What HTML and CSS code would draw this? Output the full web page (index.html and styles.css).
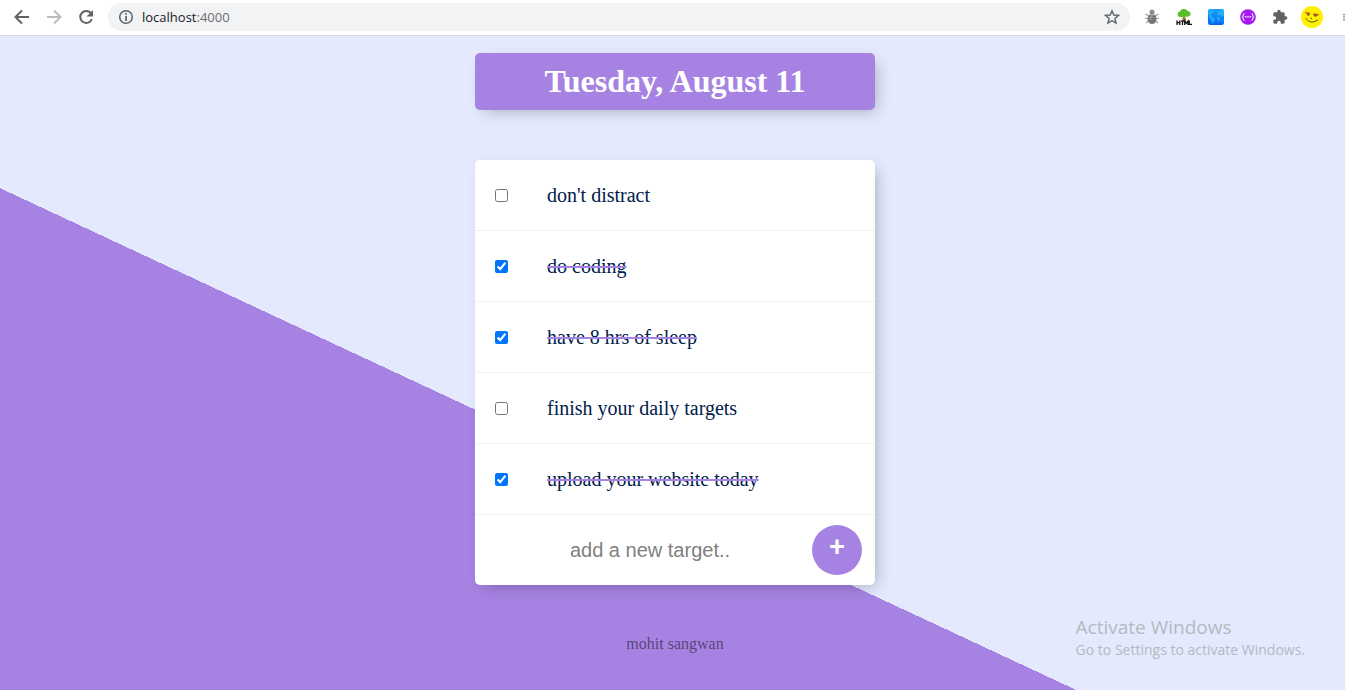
FILE: index.html
```html
<!DOCTYPE html>
<html lang="en">
<head>
<meta charset="utf-8">
<title>Daily targets</title>
<link rel="stylesheet" href="styles.css">
</head>
<body>
<header class="toolbar">
  <button class="tool" aria-label="Back"><svg width="16" height="16" viewBox="0 0 16 16" fill="none" stroke="#5f6368" stroke-width="2"><path d="M15 8H2M8 1.500 1.500 8 8 14.500"/></svg></button>
  <button class="tool" aria-label="Forward" disabled><svg width="16" height="16" viewBox="0 0 16 16" fill="none" stroke="#babcbe" stroke-width="2"><path d="M1 8h13M8 1.500 14.500 8 8 14.500"/></svg></button>
  <button class="tool" aria-label="Reload"><svg width="16" height="16" viewBox="0 0 16 16"><path d="M13.200 4.500A6 6 0 1 0 13.900 10" fill="none" stroke="#5f6368" stroke-width="2"/><path d="M15 1v6.500H8.500z" fill="#5f6368"/></svg></button>
  <div class="address">
    <svg width="16" height="16" viewBox="0 0 16 16"><circle cx="8" cy="8" r="6.300" fill="none" stroke="#5f6368" stroke-width="1.500"/><path d="M7.200 7h1.700v5H7.200zM7.200 4h1.700v1.700H7.200z" fill="#5f6368"/></svg>
    <span class="url">localhost<span class="port">:4000</span></span>
    <button class="tool" aria-label="Bookmark this page"><svg width="16" height="16" viewBox="0 0 16 16"><path d="M8 1.800 9.800 6l4.700.4-3.600 3.100 1.100 4.600L8 11.700l-4 2.400 1.100-4.600L1.500 6.400 6.200 6z" fill="none" stroke="#5f6368" stroke-width="1.400"/></svg></button>
  </div>
  <nav class="extensions" aria-label="Extensions">
    <button class="tool" aria-label="Bug reporter"><svg width="16" height="16" viewBox="0 0 16 16"><path d="M1.500 5 5 7M14.500 5 11 7M1 9.500h14M2 14l3.500-3M14 14l-3.500-3" stroke="#a0a0a0" stroke-width="1.200"/><circle cx="8" cy="3" r="2.500" fill="#8c8c8c"/><ellipse cx="8" cy="9.800" rx="4.500" ry="5.200" fill="#777"/><path d="M5 5.800h6" stroke="#ccc"/><ellipse cx="7" cy="9" rx="2" ry="2" fill="#909090"/></svg></button>
    <button class="tool" aria-label="HTML tree"><svg width="16" height="16" viewBox="0 0 16 16"><path d="M7 6h2.200l.8 6H6.200z" fill="#b0672c"/><path d="M4 2.500C5-.8 10.500-.8 11.500 2c3 0 4 3.500 2 5-1.500 1-3 .8-4 .3L8 10 7 7.500C5 8.800 2 8 1.700 5.800 1.500 3.700 2.500 2.600 4 2.500z" fill="#5dbc2c"/><path d="M1 11.500V16M1 13.700h2.800M3.800 11.500V16M4.800 12.200h3.400M6.500 12.200V16M8.700 16v-3.800l1.600 2 1.600-2V16M13.300 11.500v3.800H16" fill="none" stroke="#111" stroke-width="1.300"/></svg></button>
    <button class="tool" aria-label="World map"><svg width="16" height="16" viewBox="0 0 16 16"><defs><linearGradient id="sea" x2="0" y2="1"><stop stop-color="#19a0f6"/><stop offset="1" stop-color="#0768f0"/></linearGradient></defs><rect width="16" height="16" rx="2" fill="url(#sea)"/><path d="M0 3 3 1l3 .5L5 4 3 5.500 4 8l3 2-1 3-1.500 2L3 11 1 7zM9 2l2 .5L14 1l2 1v4l-2 2-1.500-2L11 7 9.500 5zM9 8l2.500 0L12 10l-1 3-1.500-2zM13 12l2-1v2z" fill="#26b5ff" fill-opacity=".75"/></svg></button>
    <button class="tool" aria-label="Code face"><svg width="16" height="16" viewBox="0 0 16 16"><circle cx="8" cy="8" r="7.800" fill="#a61ced"/><path d="M4.500 4.500c-2 0-.6 2.600-2 3.500 1.400.9 0 3.500 2 3.500M11.500 4.500c2 0 .6 2.600 2 3.500-1.400.9 0 3.500-2 3.500" fill="none" stroke="#f3dcff" stroke-width="1.100"/><path d="M5 7.700h1.500M7.300 7.700h1.400M9.500 7.700H11" stroke="#f3dcff" stroke-width="1.400"/></svg></button>
    <button class="tool" aria-label="Manage extensions"><svg width="16" height="16" viewBox="0 0 24 24"><path d="M20.500 11H19V7a2 2 0 0 0-2-2h-4V3.500a2.500 2.500 0 0 0-5 0V5H4a2 2 0 0 0-2 2v3.800h1.500a2.700 2.700 0 0 1 0 5.400H2V20a2 2 0 0 0 2 2h3.800v-1.500a2.700 2.700 0 0 1 5.400 0V22H17a2 2 0 0 0 2-2v-4h1.500a2.500 2.500 0 0 0 0-5z" fill="#5f6368"/></svg></button>
  </nav>
  <button class="tool" aria-label="Profile"><svg width="22" height="22" viewBox="0 0 22 22"><circle cx="11" cy="11" r="11" fill="#ffef00"/><path d="M4 6.500 9 7.500M12 8l6 .8" stroke="#f0603a" stroke-width="1.600"/><path d="M5.500 7.500h3.500q-.3 2.500-2 2.200-1.500-.3-1.500-2.200zM12.500 8.500h4q-.6 2.500-2.300 2.200-1.500-.3-1.700-2.200z" fill="#6b651c"/><path d="M4.500 12q4.500 7 12.500 2M10.300 11.500l-.3 1h1" fill="none" stroke="#5f5a00"/></svg></button>
  <button class="tool menu" aria-label="Menu"><svg width="4" height="16" viewBox="0 0 4 16" fill="#5f6368"><circle cx="2" cy="3" r="1.700"/><circle cx="2" cy="8" r="1.700"/><circle cx="2" cy="13" r="1.700"/></svg></button>
</header>
<main class="page">
  <h1 class="box heading">Tuesday, August 11</h1>
  <form class="box">
    <label class="item"><input class="check" type="checkbox"><span class="text">don't distract</span></label>
    <label class="item"><input class="check" type="checkbox" checked><span class="text">do coding</span></label>
    <label class="item"><input class="check" type="checkbox" checked><span class="text">have 8 hrs of sleep</span></label>
    <label class="item"><input class="check" type="checkbox"><span class="text">finish your daily targets</span></label>
    <label class="item"><input class="check" type="checkbox" checked><span class="text">upload your website today</span></label>
    <div class="new-item">
      <input class="entry" type="text" placeholder="add a new target.." aria-label="New target">
      <button class="add" type="button">+</button>
    </div>
  </form>
  <footer class="footer">mohit sangwan</footer>
  <aside class="notice">
    <p class="notice-title">Activate Windows</p>
    <p class="notice-text">Go to Settings to activate Windows.</p>
  </aside>
</main>
</body>
</html>
```
FILE: styles.css
```css
* {
  box-sizing: border-box;
}

body {
  margin: 0;
  min-height: 100vh;
  display: flex;
  flex-direction: column;
  overflow-x: hidden;
  font-family: "Liberation Serif", "Times New Roman", serif;
}

.toolbar {
  display: flex;
  align-items: center;
  height: 36px;
  padding: 0 0 2px 14px;
  gap: 16px;
  background: #fff;
  border-bottom: 1px solid #d7d9dd;
}

.tool {
  display: flex;
  flex: none;
  padding: 0;
  border: 0;
  background: none;
}

.address {
  flex: 1;
  display: flex;
  align-items: center;
  gap: 8px;
  height: 28px;
  margin: 0 -2px;
  padding: 0 10px;
  border-radius: 14px;
  background: #f1f3f4;
}

.url {
  flex: 1;
  font: 13px/20px "Open Sans", "Noto Sans", sans-serif;
  color: #202124;
}

.port {
  color: #6b6f73;
}

.extensions {
  display: flex;
  gap: 16px;
  margin-right: -3px;
}

.menu {
  width: 2px;
  margin-left: 4px;
}

.page {
  position: relative;
  flex: 1;
  padding: 17px 0 36px 5px;
  background: linear-gradient(25deg, #a683e3 calc(39% + 2px), #e4e9fd calc(39% + 2px));
}

.box {
  width: 400px;
  max-width: 100%;
  margin: 0 auto 50px;
  border-radius: 5px;
  background: #fff;
  box-shadow: 5px 5px 15px -5px rgba(0, 0, 0, 0.3);
}

.heading {
  padding: 10px;
  background: #a683e3;
  color: #fff;
  font-size: 32px;
  line-height: 37px;
  text-align: center;
}

.item {
  display: flex;
  align-items: center;
  height: 71px;
  border-bottom: 1px solid #f1f1f1;
}

.check {
  width: 13px;
  height: 13px;
  margin: 0 39px 0 20px;
}

.text {
  font-size: 20px;
  line-height: 24px;
  color: #00204a;
}

.check:checked + .text {
  text-decoration: line-through 2px #a683e3;
}

.new-item {
  display: flex;
  align-items: center;
  height: 70px;
  padding-right: 13px;
}

.entry {
  flex: 1;
  min-width: 0;
  height: 60px;
  margin-left: 13px;
  padding: 0;
  border: 0;
  background: transparent;
  text-align: center;
  font: 20px/24px "Liberation Sans", Arial, sans-serif;
}

.entry::placeholder {
  color: #808080;
}

.add {
  width: 50px;
  height: 50px;
  padding: 0 0 6px;
  border: 0;
  border-radius: 50%;
  background: #a683e3;
  color: #fff;
  font: 500 28px/40px Roboto, "Liberation Sans", sans-serif;
}

.footer {
  text-align: center;
  font-size: 16px;
  line-height: 18px;
  color: rgba(0, 0, 0, 0.5);
}

.notice {
  position: absolute;
  right: 40px;
  bottom: 29px;
  color: #b5b9c0;
  font-family: "Open Sans", "Noto Sans", sans-serif;
}

.notice-title {
  margin: 0;
  font-size: 19px;
  line-height: 24px;
}

.notice-text {
  margin: 0;
  font-size: 14px;
  line-height: 22px;
}
```
